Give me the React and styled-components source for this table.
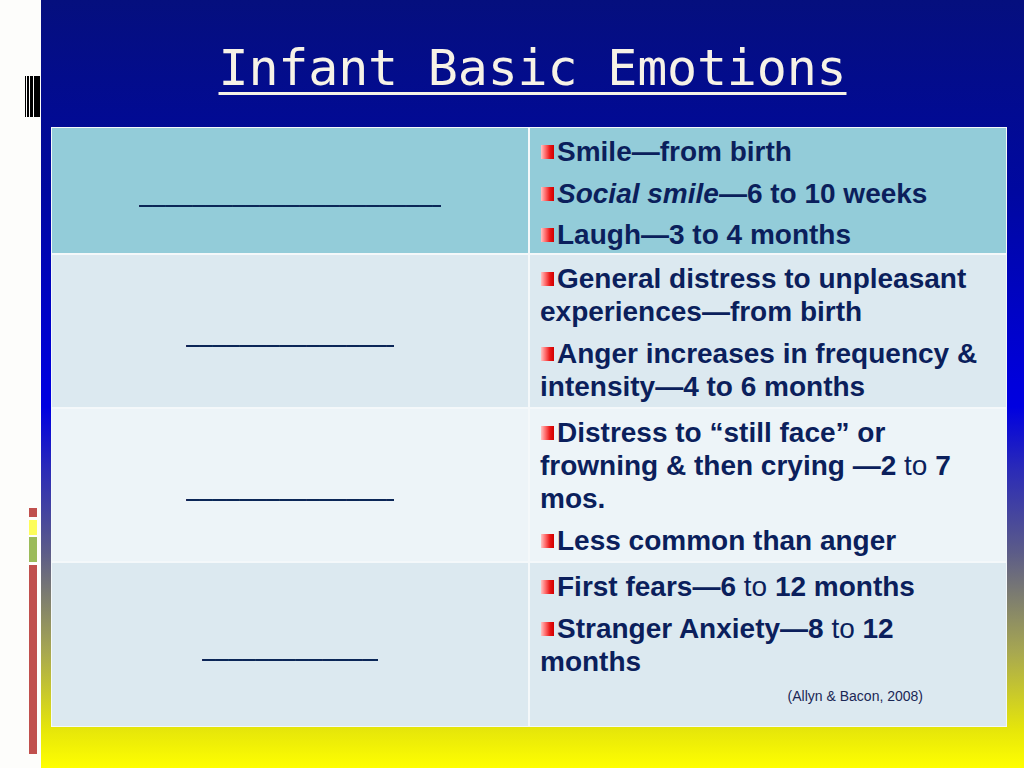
import React from "react";
import styled, { createGlobalStyle } from "styled-components";

const Global = createGlobalStyle`
  html, body { margin: 0; padding: 0; }
  body { width: 1024px; height: 768px; overflow: hidden; background: #fdfdfb; }
`;

const Slide = styled.div`
  display: flex;
  width: 1024px;
  height: 768px;
`;

const Strip = styled.aside`
  width: 41px;
  flex: none;
  background: #fdfdfb;
  display: flex;
  flex-direction: column;
  align-items: flex-end;
`;

const Barcode = styled.div`
  display: flex;
  gap: 1px;
  height: 41px;
  margin-top: 76px;
  margin-right: 1px;
`;

const Bar = styled.span`
  width: ${(p) => p.$w}px;
  background: #000;
`;

const Swatches = styled.div`
  display: flex;
  flex-direction: column;
  gap: 2.5px;
  width: 8px;
  margin-top: 391px;
  margin-right: 4px;
`;

const Swatch = styled.span`
  height: ${(p) => p.$h}px;
  background: ${(p) => p.$c};
`;

const Panel = styled.main`
  flex: 1;
  display: flex;
  flex-direction: column;
  background: linear-gradient(
    180deg,
    #050f7e 0%,
    #0008a0 25%,
    #0000dc 50%,
    #0000e0 53%,
    #2a2ab8 61%,
    #5c5c88 72%,
    #a8a850 85%,
    #e6e60a 95%,
    #ffff00 100%
  );
`;

const Header = styled.header`
  height: 127px;
  box-sizing: border-box;
  padding-top: 39px;
  text-align: center;
`;

const Title = styled.h1`
  margin: 0;
  font-family: "DejaVu Sans Mono", "Liberation Mono", monospace;
  font-weight: normal;
  font-size: 50px;
  line-height: 58px;
  letter-spacing: -0.2px;
  color: #f6f2e6;
  text-decoration: underline;
  text-decoration-thickness: 3px;
  text-underline-offset: 7px;
`;

const Table = styled.div`
  margin-left: 10px;
  width: 956px;
  height: 600px;
  box-sizing: border-box;
  padding: 1px;
  display: grid;
  grid-template-columns: 1fr 1fr;
  grid-template-rows: 125px 152px 152px 163px;
  gap: 2px;
  background: #f4f8fa;
`;

const LabelCell = styled.div`
  background: ${(p) => p.$bg};
  display: flex;
  align-items: center;
  justify-content: center;
`;

const Blank = styled.span`
  display: block;
  width: ${(p) => p.$w}px;
  overflow: hidden;
  white-space: nowrap;
  padding-top: 8px;
  font-family: "Liberation Sans", Arial, sans-serif;
  font-weight: bold;
  font-size: 24px;
  line-height: 32px;
  color: #0b2657;
  text-shadow: 0 1px 0 #0b2657;
`;

const Content = styled.div`
  background: ${(p) => p.$bg};
  box-sizing: border-box;
  padding: 7px 10px 0 10px;
  display: flex;
  flex-direction: column;
  gap: 8.5px;
  font-family: "Liberation Sans", Arial, sans-serif;
  font-weight: bold;
  font-size: 28px;
  line-height: 33px;
  color: #0b1f5c;
`;

const Item = styled.p`
  margin: 0;
`;

const Bullet = styled.span`
  display: inline-block;
  width: 13px;
  height: 14px;
  margin: 0 3px 2px 1px;
  background: linear-gradient(90deg, #ffc4c4 0%, #ff6a6a 35%, #e81414 70%, #d20000 100%);
`;

const Reg = styled.span`
  font-weight: normal;
`;

const Cite = styled.p`
  margin: 0;
  padding-right: 73px;
  text-align: right;
  font-family: "Liberation Sans", Arial, sans-serif;
  font-weight: normal;
  font-size: 14px;
  line-height: 20px;
  color: #1a2755;
`;

const UNDERSCORES = "_".repeat(40);

const rows = [
  {
    bg: "#93ccd9",
    blank: 302,
    items: [
      <>Smile—from birth</>,
      <>
        <i>Social smile</i>—6 to 10 weeks
      </>,
      <>Laugh—3 to 4 months</>,
    ],
  },
  {
    bg: "#dce9f0",
    blank: 208,
    items: [
      <>General distress to unpleasant experiences—from birth</>,
      <>Anger increases in frequency &amp; intensity—4 to 6 months</>,
    ],
  },
  {
    bg: "#edf4f8",
    blank: 208,
    items: [
      <>
        Distress to “still face” or frowning &amp; then crying —2 <Reg>to</Reg> 7 mos.
      </>,
      <>Less common than anger</>,
    ],
  },
  {
    bg: "#dce9f0",
    blank: 176,
    items: [
      <>
        First fears—6 <Reg>to</Reg> 12 months
      </>,
      <>
        Stranger Anxiety—8 <Reg>to</Reg> 12 months
      </>,
    ],
    cite: "(Allyn & Bacon, 2008)",
  },
];

export default function App() {
  return (
    <>
      <Global />
      <Slide>
        <Strip>
          <Barcode>
            <Bar $w={1} />
            <Bar $w={2} />
            <Bar $w={3} />
            <Bar $w={6} />
          </Barcode>
          <Swatches>
            <Swatch $h={9} $c="#c0504d" />
            <Swatch $h={15} $c="#fdfd5a" />
            <Swatch $h={25} $c="#9bbb59" />
            <Swatch $h={189} $c="#c0504d" />
          </Swatches>
        </Strip>
        <Panel>
          <Header>
            <Title>Infant Basic Emotions</Title>
          </Header>
          <Table>
            {rows.map((r, i) => (
              <React.Fragment key={i}>
                <LabelCell $bg={r.bg}>
                  <Blank $w={r.blank}>{UNDERSCORES}</Blank>
                </LabelCell>
                <Content $bg={r.bg}>
                  {r.items.map((it, j) => (
                    <Item key={j}>
                      <Bullet />
                      {it}
                    </Item>
                  ))}
                  {r.cite && <Cite>{r.cite}</Cite>}
                </Content>
              </React.Fragment>
            ))}
          </Table>
        </Panel>
      </Slide>
    </>
  );
}
